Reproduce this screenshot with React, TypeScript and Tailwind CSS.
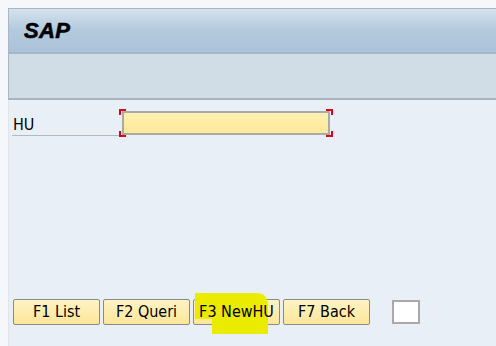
export default function App() {
  const buttons = ["F1 List", "F2 Queri", "F3 NewHU", "F7 Back"];

  return (
    <div className="w-[496px] h-[346px] bg-[#f5f7fb] pt-[8px] pl-[8px] flex flex-col overflow-hidden font-['DejaVu_Sans_Condensed','Liberation_Sans',sans-serif]">
      {/* title bar */}
      <div className="h-[44px] border-t border-l border-[#aab6c3] bg-gradient-to-b from-[#d5e2ed] via-[#b3c9dd] to-[#aac2da] flex items-center pl-[15px] shrink-0">
        <span className="font-['Liberation_Sans',Arial,sans-serif] text-[22px] font-bold italic text-black tracking-[0.3px] [-webkit-text-stroke:0.6px_black]">SAP</span>
      </div>
      {/* toolbar */}
      <div className="h-[48px] border-t-2 border-b-2 border-l border-t-[#a8b6c4] border-b-[#a9b3bf] border-l-[#aab6c3] bg-[#d0dce6] shrink-0" />
      {/* content */}
      <div className="flex-1 bg-[#e9eff6] border-l border-[#dfe5ec] flex flex-col">
        <div className="flex items-center mt-[10px] pl-[3px]">
          <div className="w-[108px] h-[26px] border-b border-[#b5b9be] flex items-end pb-[2px] pl-[1px] text-[16px] leading-none text-black">
            HU
          </div>
          <div className="relative ml-[2px] mb-[1px]">
            <div className="w-[208px] h-[24px] border-2 border-[#a9a9a9] bg-gradient-to-b from-[#fff0b0] to-[#fce99a]" />
            <span className="absolute -left-[3px] -top-[2px] w-[7px] h-[6px] border-l-2 border-t-2 border-[#e0001a]" />
            <span className="absolute -right-[3px] -top-[2px] w-[7px] h-[6px] border-r-2 border-t-2 border-[#e0001a]" />
            <span className="absolute -left-[3px] -bottom-[2px] w-[7px] h-[6px] border-l-2 border-b-2 border-[#e0001a]" />
            <span className="absolute -right-[3px] -bottom-[2px] w-[7px] h-[6px] border-r-2 border-b-2 border-[#e0001a]" />
          </div>
        </div>
        <div className="flex-1" />
        <div className="flex items-center pl-[4px] mb-[21px]">
          {buttons.map((b, i) => (
            <div
              key={b}
              className={`relative w-[87px] h-[26px] rounded-[2px] border border-[#8a8a8a] bg-gradient-to-b from-[#fff3c4] to-[#fde699] flex items-center justify-center text-[16px] text-black ${i > 0 ? "ml-[3px]" : ""}`}
            >
              {/* marker highlight drawn over the button */}
              {i === 2 && (
                <span className="absolute left-[1px] top-[-7px] w-[74px] h-[42px] pointer-events-none">
                  <svg width="74" height="42" viewBox="0 0 74 42">
                    <path d="M0 0 H61 Q73 0 73 12 V41 H17 V26 H0 Z" fill="#ebeb00" />
                  </svg>
                </span>
              )}
              <span className="relative">{b}</span>
            </div>
          ))}
          <div className="ml-[22px] w-[28px] h-[24px] border-2 border-[#a9a9a9] bg-white" />
        </div>
      </div>
    </div>
  );
}
